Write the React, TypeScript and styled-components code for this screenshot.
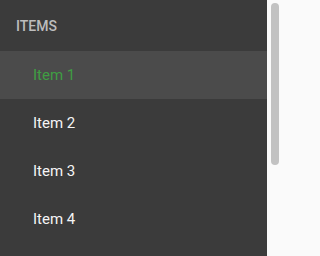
import React from 'react';
import styled, { createGlobalStyle } from 'styled-components';

const GlobalStyle = createGlobalStyle`
  html, body {
    margin: 0;
    padding: 0;
    background: #fafafa;
    overflow: hidden;
  }
  body {
    font-family: Roboto, 'Noto Sans', sans-serif;
  }
`;

const Frame = styled.div`
  display: flex;
  width: 281px;
  height: 100vh;
`;

const Panel = styled.nav`
  flex: 1;
  min-width: 0;
  background: #3b3b3b;
  overflow: hidden;
`;

const Header = styled.div`
  height: 51px;
  display: flex;
  align-items: center;
  padding-left: 16px;
  font-size: 14px;
  font-weight: 500;
  color: #bdbdbd;
  text-transform: uppercase;
`;

const List = styled.ul`
  list-style: none;
  margin: 0;
  padding: 0;
`;

const Item = styled.li<{ $active?: boolean }>`
  height: 48px;
  display: flex;
  align-items: center;
  padding-left: 33px;
  font-size: 15px;
  color: ${(p) => (p.$active ? '#3f9e43' : '#f5f5f5')};
  background: ${(p) => (p.$active ? '#4b4b4b' : 'transparent')};
  cursor: pointer;
`;

// drawn scrollbar, the list is taller than the window
const Track = styled.div`
  width: 14px;
  flex: none;
  background: #fafafa;
  padding: 3px 2px 0 4px;
  box-sizing: border-box;
`;

const Thumb = styled.div`
  width: 8px;
  height: 162px;
  border-radius: 4px;
  background: #c2c2c2;
`;

const items = ['Item 1', 'Item 2', 'Item 3', 'Item 4'];

export default function App() {
  return (
    <>
      <GlobalStyle />
      <Frame>
        <Panel>
          <Header>Items</Header>
          <List>
            {items.map((label, i) => (
              <Item key={label} $active={i === 0}>
                {label}
              </Item>
            ))}
          </List>
        </Panel>
        <Track>
          <Thumb />
        </Track>
      </Frame>
    </>
  );
}
